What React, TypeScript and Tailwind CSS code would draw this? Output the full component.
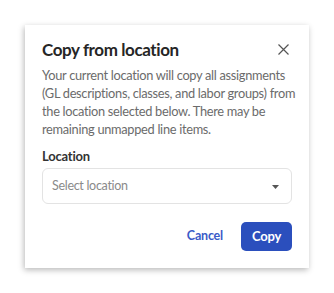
import React from "react";

export default function App() {
  return (
    <div className="w-[334px] h-[293px] bg-white pt-[25px] pl-[25px]" style={{ fontFamily: "Lato, 'Open Sans', sans-serif" }}>
      <div className="relative w-[284px] h-[243px] bg-white shadow-[-1px_2px_6px_rgba(0,0,0,0.28)] px-[17px] pt-[13px]">
        <div className="flex items-center justify-between h-[24px]">
          <h2 className="text-[17px] leading-[24px] font-bold text-[#262626] tracking-[-0.4px]">Copy from location</h2>
          <button className="mr-[3px] mt-[-2px] text-[#555]" aria-label="Close">
            <svg width="11" height="11" viewBox="0 0 11 11" fill="none" stroke="currentColor" strokeWidth="1.2">
              <path d="M0.5 0.5 L10.5 10.5 M10.5 0.5 L0.5 10.5" />
            </svg>
          </button>
        </div>
        <p className="mt-[4px] text-[12.8px] leading-[18px] text-[#6b6b6b] tracking-[-0.3px]">
          <span className="block whitespace-nowrap">Your current location will copy all assignments</span>
          <span className="block whitespace-nowrap">(GL descriptions, classes, and labor groups) from</span>
          <span className="block whitespace-nowrap">the location selected below. There may be</span>
          <span className="block whitespace-nowrap">remaining unmapped line items.</span>
        </p>
        <div className="mt-[9px] text-[13px] leading-[18px] font-bold text-[#333] tracking-[-0.2px]">Location</div>
        <div className="mt-[3px] h-[36px] w-[250px] rounded-[6px] border border-[#e3e3e3] flex items-center justify-between pl-[9px] pr-[12px]">
          <span className="text-[12.5px] text-[#8a8a8a] tracking-[-0.3px]">Select location</span>
          <svg width="7" height="4" viewBox="0 0 7 4" className="mt-[1px]">
            <path d="M0 0 L7 0 L3.5 4 Z" fill="#555" />
          </svg>
        </div>
        <div className="mt-[18px] flex justify-end items-center gap-[18px]">
          <button className="text-[12.5px] font-bold text-[#3a5bc7] tracking-[-0.2px]">Cancel</button>
          <button className="h-[29px] w-[51px] rounded-[5px] bg-[#2b4fbd] text-white text-[13px] font-bold tracking-[-0.2px]">Copy</button>
        </div>
      </div>
    </div>
  );
}
